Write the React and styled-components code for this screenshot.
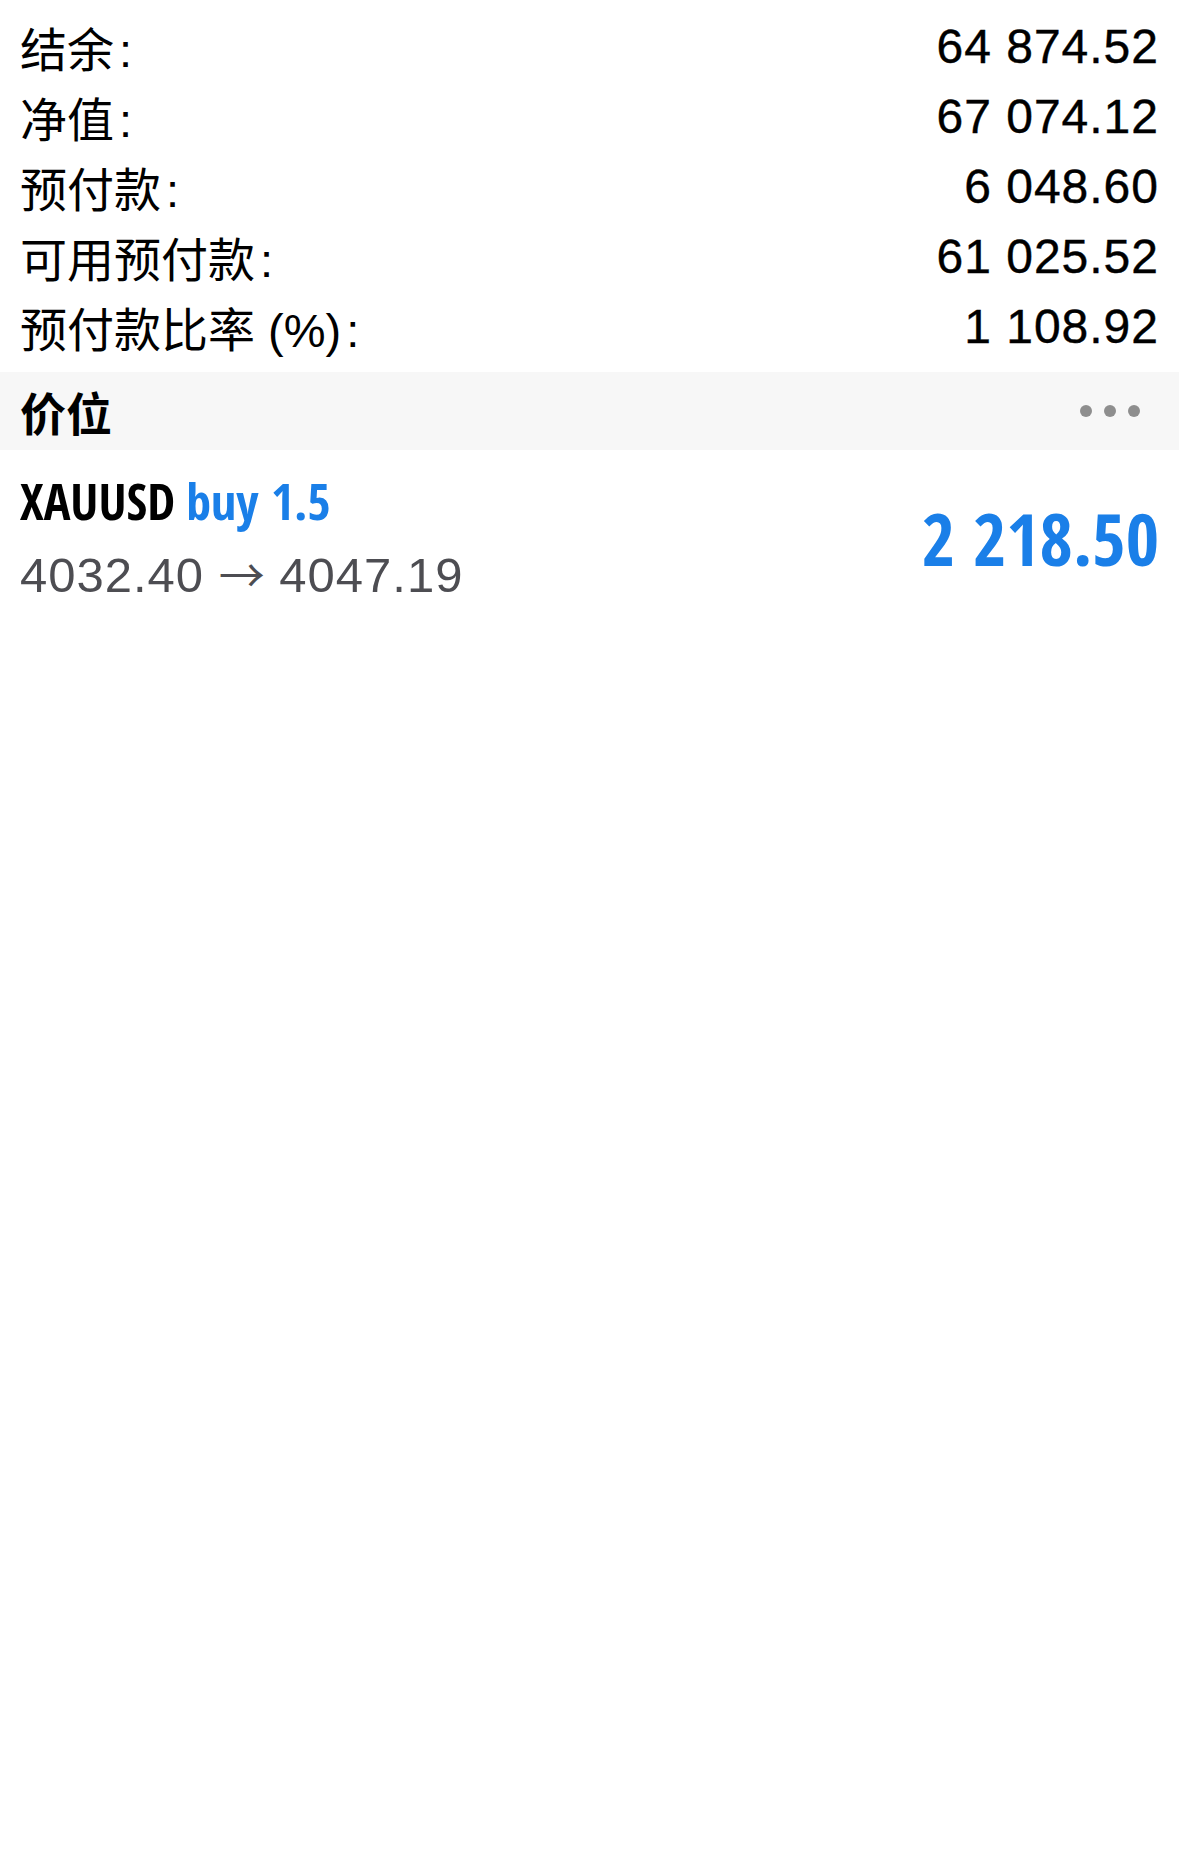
import React from "react";
import styled, { createGlobalStyle } from "styled-components";

const GlobalStyle = createGlobalStyle`
  body {
    margin: 0;
    background: #ffffff;
    font-family: "Liberation Sans", "Noto Sans CJK SC", sans-serif;
  }
`;

const summary = [
  { label: "结余", value: "64 874.52" },
  { label: "净值", value: "67 074.12" },
  { label: "预付款", value: "6 048.60" },
  { label: "可用预付款", value: "61 025.52" },
  { label: "预付款比率 (%)", value: "1 108.92" },
];

function App() {
  return (
    <Page>
      <GlobalStyle />
      <SummaryList>
        {summary.map((row) => (
          <SummaryRow key={row.label}>
            <Label>
              {row.label}
              <Colon>:</Colon>
            </Label>
            <Value>{row.value}</Value>
          </SummaryRow>
        ))}
      </SummaryList>

      <SectionHeader>
        <SectionTitle>价位</SectionTitle>
        <MoreDots>
          <Dot />
          <Dot />
          <Dot />
        </MoreDots>
      </SectionHeader>

      <PositionRow>
        <PositionInfo>
          <SymbolLine>
            <Symbol>XAUUSD</Symbol>
            <Side>buy 1.5</Side>
          </SymbolLine>
          <PriceLine>
            4032.40 <Arrow>→</Arrow> 4047.19
          </PriceLine>
        </PositionInfo>
        <Profit>2 218.50</Profit>
      </PositionRow>
    </Page>
  );
}

const Page = styled.div`
  width: 1179px;
  min-height: 1876px;
  background: #ffffff;
`;

const SummaryList = styled.div`
  display: flex;
  flex-direction: column;
  padding: 11px 20px;
`;

const SummaryRow = styled.div`
  display: flex;
  align-items: center;
  justify-content: space-between;
  height: 70px;
`;

const Label = styled.span`
  font-family: "Liberation Sans", "Noto Sans CJK SC", sans-serif;
  font-size: 47px;
  color: #000000;
`;

const Colon = styled.span`
  margin-left: 5px;
`;

const Value = styled.span`
  font-family: "Liberation Sans", sans-serif;
  font-size: 48px;
  letter-spacing: 1px;
  color: #000000;
  -webkit-text-stroke: 0.4px #000000;
`;

const SectionHeader = styled.div`
  display: flex;
  align-items: center;
  justify-content: space-between;
  height: 78px;
  padding: 0 39px 0 20px;
  background: #f7f7f7;
`;

const SectionTitle = styled.span`
  font-family: "Noto Sans CJK SC", sans-serif;
  font-weight: 700;
  font-size: 46px;
  color: #000000;
`;

const MoreDots = styled.div`
  display: flex;
  gap: 12px;
`;

const Dot = styled.span`
  width: 12px;
  height: 12px;
  border-radius: 50%;
  background: #8e8e8e;
`;

const PositionRow = styled.div`
  display: flex;
  align-items: center;
  justify-content: space-between;
  padding: 14px 20px;
`;

const PositionInfo = styled.div`
  display: flex;
  flex-direction: column;
`;

const SymbolLine = styled.div`
  height: 74px;
  display: flex;
  align-items: center;
  gap: 11px;
  font-family: "Open Sans Condensed", "Roboto Condensed", sans-serif;
  font-weight: 700;
  font-size: 50px;
`;

const Symbol = styled.span`
  color: #000000;
`;

const Side = styled.span`
  color: #1a7fe8;
`;

const PriceLine = styled.div`
  height: 74px;
  display: flex;
  align-items: center;
  white-space: pre;
  font-family: "Liberation Sans", sans-serif;
  font-size: 49px;
  letter-spacing: 1px;
  color: #4d4d52;
`;

const Arrow = styled.span`
  font-family: "Noto Sans CJK SC", sans-serif;
  font-size: 46px;
  letter-spacing: 0;
  transform: translateY(-3px);
  display: inline-block;
`;

const Profit = styled.span`
  font-family: "Open Sans Condensed", "Roboto Condensed", sans-serif;
  font-weight: 700;
  font-size: 72px;
  color: #1a7fe8;
`;

export default App;
